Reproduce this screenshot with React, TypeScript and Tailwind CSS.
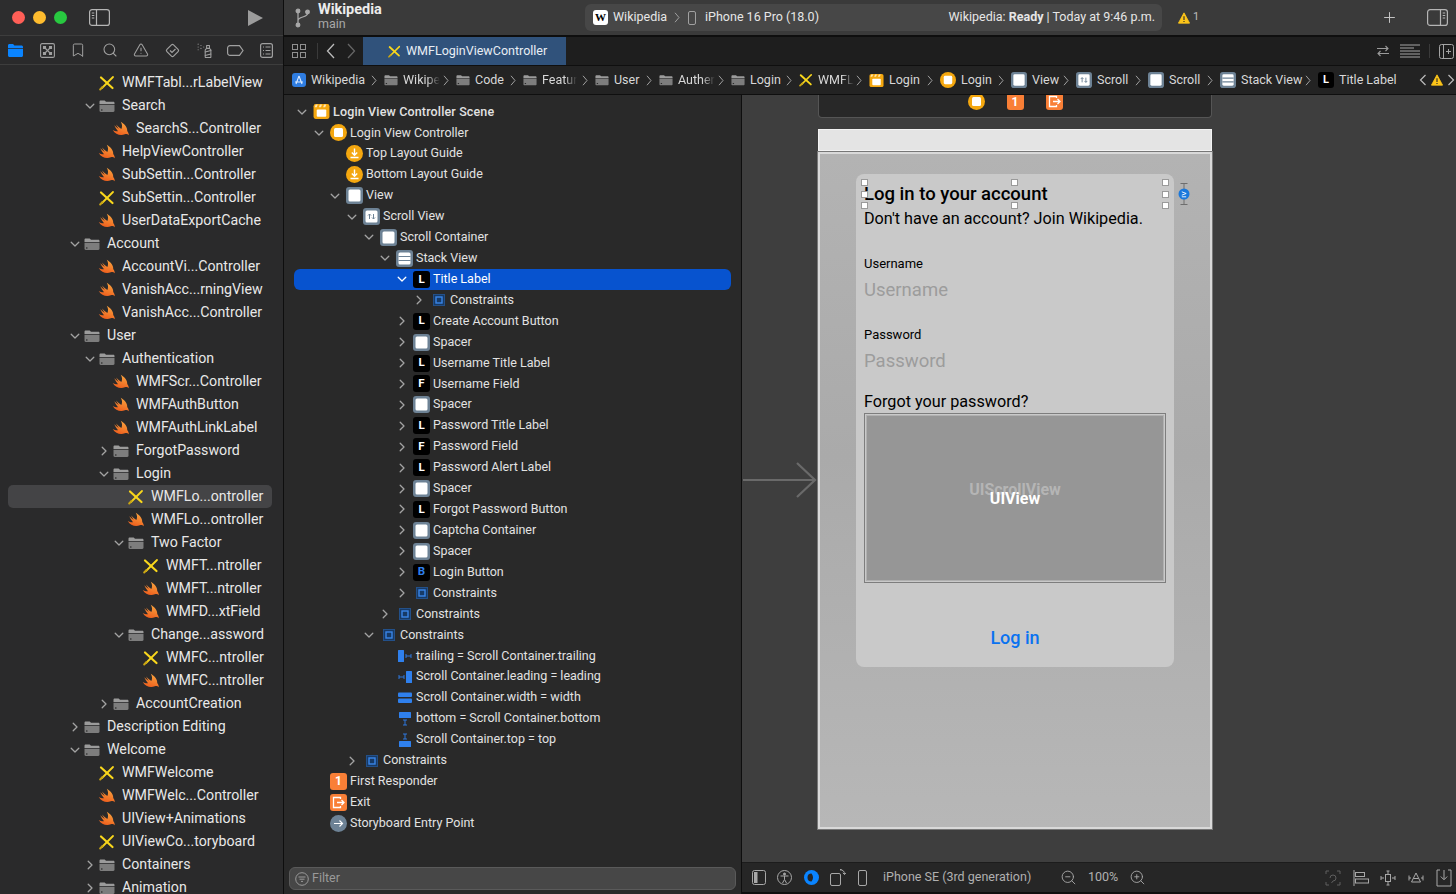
import { Bookmark, Plus, Search, SprayCan, TriangleAlert, ZoomIn, ZoomOut } from "lucide-react";
import type { ReactElement } from "react";

const Chevron = ({ open, color = "#a3a3a3" }: { open?: boolean; color?: string }) => (
  <svg width="10" height="10" viewBox="0 0 10 10" fill="none" stroke={color} strokeWidth="1.3" strokeLinecap="round" strokeLinejoin="round">
    {open ? <path d="M1.2 3.2 5 7 8.8 3.2" /> : <path d="M3.2 1.2 7 5 3.2 8.8" />}
  </svg>
);

const CrumbChevron = () => (
  <svg width="6" height="11" viewBox="0 0 6 11" fill="none" stroke="#a0a0a0" strokeWidth="1">
    <path d="M1 .8 5 5.500 1 10.200" />
  </svg>
);

const SwiftIcon = ({ size = 18 }: { size?: number }) => (
  <svg width={size} height={size} viewBox="0 0 24 24">
    <defs>
      <linearGradient id="swiftfill" x1="0.7" y1="0" x2="0.3" y2="1">
        <stop offset="0" stopColor="#f9a63f" />
        <stop offset="1" stopColor="#ee5c1c" />
      </linearGradient>
    </defs>
    <path
      fill="url(#swiftfill)"
      d="M1 13.2C3 14.500 5.500 15.300 8 15 6 12.500 4.200 9.800 3 7c2 2 4 3.600 6 5-1.200-2-2.600-4-3.700-6 2.300 2.300 4.700 4.200 7.200 6 1.300-3 1.300-6.400-.8-9.800 5.300 3 9.100 7.800 8.600 12.400 1.700 2.100 2.400 4.500 1.800 5.600-1.100-1.700-3.100-2-5-1.100C11 21.800 4.500 19 1 13.200Z"
    />
  </svg>
);

const StoryboardIcon = ({ size = 16 }: { size?: number }) => (
  <svg width={size} height={size} viewBox="0 0 16 16" fill="none" strokeLinecap="round">
    <path d="M2 2.500 13.500 13" stroke="#f9d71c" strokeWidth="2.200" />
    <path d="M14 2 3 13" stroke="#f9d71c" strokeWidth="1.800" />
    <path d="M1.200 14.500 3.500 12" stroke="#c9a514" strokeWidth="2" />
  </svg>
);

const FolderIcon = ({ size = 16 }: { size?: number }) => (
  <svg width={size} height={size} viewBox="0 0 16 16">
    <path d="M.5 3.700C.5 3 1 2.500 1.700 2.500h4L7 3.700h7.300c.7 0 1.200.5 1.200 1.200V6H.5Z" fill="#9b9b9b" />
    <path d="M.5 6.700h15v6.100c0 .7-.5 1.200-1.200 1.200H1.700C1 14 .5 13.500 .5 12.800Z" fill="#7d7d7d" />
    <rect x="2" y="11.400" width="1.500" height="1.200" fill="#2c2c2c" />
  </svg>
);

const SceneIcon = ({ size = 17 }: { size?: number }) => (
  <svg width={size} height={size} viewBox="0 0 16 16">
    <rect x="0.500" y="1" width="15" height="14" rx="2" fill="#f4a70f" />
    <path d="M2.500 1.500h2l-1 2.500h-2Zm4 0h2l-1 2.500h-2Zm4 0h2l-1 2.500h-2Z" fill="#ffe6b0" />
    <rect x="3.500" y="6" width="9" height="7" rx="1" fill="#fff" />
  </svg>
);

const VcIcon = ({ size = 17 }: { size?: number }) => (
  <svg width={size} height={size} viewBox="0 0 17 17">
    <circle cx="8.500" cy="8.500" r="8.500" fill="#f4a70f" />
    <rect x="4" y="4" width="9" height="9" rx="1.500" fill="#fff" />
  </svg>
);

const GuideIcon = () => (
  <svg width="17" height="17" viewBox="0 0 17 17" fill="none">
    <circle cx="8.500" cy="8.500" r="8.500" fill="#f4a70f" />
    <path d="M8.500 3.500v6.500M5.800 7.500l2.700 2.700 2.700-2.700M4.500 12.500h8" stroke="#fff" strokeWidth="1.400" />
  </svg>
);

const ViewIcon = ({ kind = "plain", size = 17 }: { kind?: "plain" | "scroll" | "stack"; size?: number }) => (
  <svg width={size} height={size} viewBox="0 0 17 17" fill="none">
    <rect x="0" y="0" width="17" height="17" rx="3" fill="#6d8295" />
    <rect x="2.500" y="2.500" width="12" height="12" rx="1.500" fill="#fff" />
    {kind === "scroll" && <path d="M6.500 11V6M5 7.500l1.500-1.500L8 7.500M10.500 6v5M9 9.500l1.500 1.500L12 9.500" stroke="#6d8295" strokeWidth="1" />}
    {kind === "stack" && <path d="M2.500 6.500h12M2.500 10.500h12" stroke="#6d8295" strokeWidth="1.200" />}
  </svg>
);

const LetterIcon = ({ letter, color = "#fff" }: { letter: string; color?: string }) => (
  <span className="flex h-[17px] w-[17px] items-center justify-center rounded-[3px] bg-black text-[11.500px] font-bold leading-none" style={{ color }}>
    {letter}
  </span>
);

const ConstraintsIcon = () => (
  <svg width="12" height="12" viewBox="0 0 12 12" fill="none">
    <rect x="0.500" y="0.500" width="11" height="11" fill="#173a66" stroke="#235089" />
    <rect x="3" y="3" width="6" height="6" stroke="#3b86e8" strokeWidth="1.400" />
  </svg>
);

const ConstraintLine = ({ kind }: { kind: "trailing" | "leading" | "width" | "bottom" | "top" }) => (
  <svg width="14" height="14" viewBox="0 0 14 14" fill="#2f80ed">
    {kind === "trailing" && (
      <g>
        <rect x="0" y="1" width="6" height="12" rx="0.500" />
        <path d="M8 5v4M13 5v4M8 7h5" stroke="#2f80ed" strokeWidth="0.900" fill="none" />
      </g>
    )}
    {kind === "leading" && (
      <g>
        <rect x="8" y="1" width="6" height="12" rx="0.500" />
        <path d="M1 5v4M6 5v4M1 7h5" stroke="#2f80ed" strokeWidth="0.900" fill="none" />
      </g>
    )}
    {kind === "width" && (
      <g>
        <rect x="0" y="1.500" width="14" height="4.500" rx="1" />
        <rect x="0" y="7.500" width="14" height="4.500" rx="1" />
      </g>
    )}
    {kind === "bottom" && (
      <g>
        <rect x="1" y="0" width="12" height="6" rx="0.500" />
        <path d="M5 8h4M5 13h4M7 8v5" stroke="#2f80ed" strokeWidth="0.900" fill="none" />
      </g>
    )}
    {kind === "top" && (
      <g>
        <rect x="1" y="8" width="12" height="6" rx="0.500" />
        <path d="M5 1h4M5 6h4M7 1v5" stroke="#2f80ed" strokeWidth="0.900" fill="none" />
      </g>
    )}
  </svg>
);

const ResponderIcon = () => (
  <span className="flex h-[17px] w-[17px] items-center justify-center rounded-[3px] bg-[#f97f36] text-[12px] font-bold leading-none text-white">1</span>
);

const ExitIcon = ({ size = 17 }: { size?: number }) => (
  <svg width={size} height={size} viewBox="0 0 17 17" fill="none">
    <rect width="17" height="17" rx="3" fill="#f97f36" />
    <path d="M10.500 5V3.500h-7v10h7V12M7 8.500h7M11.500 6l2.500 2.500-2.500 2.500" stroke="#fff" strokeWidth="1.300" />
  </svg>
);

const EntryIcon = () => (
  <svg width="17" height="17" viewBox="0 0 17 17" fill="none">
    <circle cx="8.500" cy="8.500" r="8.500" fill="#6d8295" />
    <path d="M4 8.500h8.500M9.500 5.500l3 3-3 3" stroke="#fff" strokeWidth="1.200" />
  </svg>
);

const WarnIcon = ({ size = 14 }: { size?: number }) => (
  <svg width={size} height={size} viewBox="0 0 14 14">
    <path d="M7 1 13.500 13H.5Z" fill="#fcc419" stroke="#fcc419" strokeLinejoin="round" />
    <path d="M7 5v4.200M7 10.400v1.200" stroke="#2a2a2a" strokeWidth="1.300" />
  </svg>
);

const PanelIcon = ({ side }: { side: "left" | "right" }) => (
  <svg width="21" height="17" viewBox="0 0 21 17" fill="none" stroke="#b5b5b5" strokeWidth="1.200">
    <rect x="0.600" y="0.600" width="19.800" height="15.800" rx="2.500" />
    {side === "left" ? <path d="M7.500 1v15M2.800 4h2.500M2.800 6.500h2.500M2.800 9h2.500" /> : <path d="M13.500 1v15M15.700 4h2.500M15.700 6.500h2.500M15.700 9h2.500" />}
  </svg>
);

const BranchIcon = () => (
  <svg width="15" height="20" viewBox="0 0 15 20" fill="none" stroke="#a8a8a8" strokeWidth="1.300">
    <circle cx="3" cy="3" r="1.800" fill="#a8a8a8" />
    <circle cx="3" cy="17" r="1.800" fill="#a8a8a8" />
    <circle cx="12.500" cy="4" r="1.800" fill="#a8a8a8" />
    <path d="M3 4v12M12.500 5.500c0 4-9.500 3-9.500 7" />
  </svg>
);

const NavFolder = () => (
  <svg width="15" height="13" viewBox="0 0 15 13">
    <path d="M0 1.500C0 .7.600 0 1.400 0h3.700l1.300 1.500h7c.9 0 1.600.6 1.600 1.400V4H0Z" fill="#0a84ff" />
    <path d="M0 4.800h15v6.700c0 .9-.7 1.500-1.500 1.500h-12C.7 13 0 12.400 0 11.500Z" fill="#0a84ff" />
  </svg>
);

const Navigators = () => {
  const c = "#a0a0a0";
  return (
    <div className="flex h-[30px] shrink-0 items-center border-y border-[#3d3d3d]">
      {[
        <NavFolder key="a" />,
        <svg key="b" width="15" height="15" viewBox="0 0 15 15" fill="none" stroke={c} strokeWidth="1.100">
          <rect x="0.600" y="0.600" width="13.800" height="13.800" rx="1.500" />
          <path d="M4 4l7 7M11 4l-7 7" />
          <path d="M3.500 3.500h2v2h-2Zm6 0h2v2h-2Zm-6 6h2v2h-2Zm6 0h2v2h-2Z" fill={c} />
        </svg>,
        <Bookmark key="c" size={16} color={c} strokeWidth={1.500} />,
        <Search key="d" size={16} color={c} strokeWidth={1.600} />,
        <TriangleAlert key="e" size={16} color={c} strokeWidth={1.600} />,
        <svg key="f" width="15" height="15" viewBox="0 0 15 15" fill="none" stroke={c} strokeWidth="1.200">
          <rect x="2.800" y="2.800" width="9.400" height="9.400" rx="1.500" transform="rotate(45 7.500 7.500)" />
          <path d="M5 7.500l2 2 3.500-3.500" />
        </svg>,
        <SprayCan key="g" size={17} color={c} strokeWidth={1.500} />,
        <svg key="h" width="17" height="11" viewBox="0 0 17 11" fill="none" stroke={c} strokeWidth="1.200">
          <path d="M3 .6h9.500L16 5.500l-3.500 4.900H3A2.400 2.400 0 0 1 .6 8V3A2.400 2.400 0 0 1 3 .6Z" />
        </svg>,
        <svg key="i" width="13" height="15" viewBox="0 0 13 15" fill="none" stroke={c} strokeWidth="1.200">
          <rect x="0.600" y="0.600" width="11.800" height="13.800" rx="2" />
          <path d="M3 4h1M5.500 4h5M3 7.500h1M5.500 7.500h5M3 11h1M5.500 11h5" />
        </svg>,
      ].map((icon, i) => (
        <div key={i} className="flex h-full w-[31.400px] shrink-0 items-center justify-center">
          {icon}
        </div>
      ))}
    </div>
  );
};

type TreeKind = "swift" | "sb" | "open" | "closed";
const tree: [string, number, TreeKind][] = [
  ["WMFTabl...rLabelView", 1, "sb"],
  ["Search", 1, "open"],
  ["SearchS...Controller", 2, "swift"],
  ["HelpViewController", 1, "swift"],
  ["SubSettin...Controller", 1, "swift"],
  ["SubSettin...Controller", 1, "sb"],
  ["UserDataExportCache", 1, "swift"],
  ["Account", 0, "open"],
  ["AccountVi...Controller", 1, "swift"],
  ["VanishAcc...rningView", 1, "swift"],
  ["VanishAcc...Controller", 1, "swift"],
  ["User", 0, "open"],
  ["Authentication", 1, "open"],
  ["WMFScr...Controller", 2, "swift"],
  ["WMFAuthButton", 2, "swift"],
  ["WMFAuthLinkLabel", 2, "swift"],
  ["ForgotPassword", 2, "closed"],
  ["Login", 2, "open"],
  ["WMFLo...ontroller", 3, "sb"],
  ["WMFLo...ontroller", 3, "swift"],
  ["Two Factor", 3, "open"],
  ["WMFT...ntroller", 4, "sb"],
  ["WMFT...ntroller", 4, "swift"],
  ["WMFD...xtField", 4, "swift"],
  ["Change...assword", 3, "open"],
  ["WMFC...ntroller", 4, "sb"],
  ["WMFC...ntroller", 4, "swift"],
  ["AccountCreation", 2, "closed"],
  ["Description Editing", 0, "closed"],
  ["Welcome", 0, "open"],
  ["WMFWelcome", 1, "sb"],
  ["WMFWelc...Controller", 1, "swift"],
  ["UIView+Animations", 1, "swift"],
  ["UIViewCo...toryboard", 1, "sb"],
  ["Containers", 1, "closed"],
  ["Animation", 1, "closed"],
];
const treeIndent = ["pl-[59px]", "pl-[74px]", "pl-[88px]", "pl-[103px]", "pl-[118px]"];

const Sidebar = () => (
  <aside className="flex h-full w-[284px] shrink-0 flex-col overflow-hidden border-r border-[#0e0e0e] bg-[#2a2a2b]">
    <div className="flex h-[35px] shrink-0 items-center bg-[#2d2d2e] pl-[12px]">
      <span className="h-[13px] w-[13px] rounded-full bg-[#ff5f57]" />
      <span className="ml-[8px] h-[13px] w-[13px] rounded-full bg-[#febc2e]" />
      <span className="ml-[8px] h-[13px] w-[13px] rounded-full bg-[#28c840]" />
      <span className="ml-[22px]">
        <PanelIcon side="left" />
      </span>
      <svg className="ml-[138px]" width="15" height="16" viewBox="0 0 15 16">
        <path d="M0 0 15 8 0 16Z" fill="#9c9c9c" />
      </svg>
    </div>
    <Navigators />
    <div className="pt-[6px]">
      {tree.map(([name, level, kind], i) => (
        <div
          key={i}
          className={`ml-[8px] mr-[11px] flex h-[23px] items-center rounded-[5px] text-[14.200px] text-[#e8e8e8] ${treeIndent[level]} ${i === 18 ? "bg-[#444446]" : ""}`}
        >
          <span className="flex w-[16px] justify-center">{kind === "open" ? <Chevron open /> : kind === "closed" ? <Chevron /> : null}</span>
          <span className="flex w-[24px] justify-center pr-[6px]">
            {kind === "swift" ? <SwiftIcon /> : kind === "sb" ? <StoryboardIcon /> : <FolderIcon />}
          </span>
          <span className="whitespace-nowrap">{name}</span>
        </div>
      ))}
    </div>
  </aside>
);

const Toolbar = () => (
  <div className="flex h-[35px] shrink-0 items-center bg-[#3a3a3a]">
    <div className="flex w-[34px] justify-center pl-[2px]">
      <BranchIcon />
    </div>
    <div className="-mt-[2px] w-[267px] leading-none">
      <div className="text-[14.500px] font-bold text-[#ececec]">Wikipedia</div>
      <div className="text-[12.500px] text-[#a8a8a8]">main</div>
    </div>
    <div className="flex h-[27px] w-[577px] items-center rounded-[6px] bg-[#474747] pl-[8px] pr-[7px] text-[12.500px] text-[#e6e6e6]">
      <span className="flex h-[15px] w-[15px] items-center justify-center rounded-[3px] bg-white font-['Liberation_Serif',serif] text-[11px] font-bold text-black">W</span>
      <span className="ml-[5px]">Wikipedia</span>
      <span className="ml-[7px]">
        <CrumbChevron />
      </span>
      <svg className="ml-[8px]" width="8" height="14" viewBox="0 0 8 14" fill="none" stroke="#a0a0a0">
        <rect x="0.500" y="0.500" width="7" height="13" rx="1.500" />
      </svg>
      <span className="ml-[9px]">iPhone 16 Pro (18.0)</span>
      <span className="ml-auto">
        Wikipedia: <b className="font-bold">Ready</b> | Today at 9:46 p.m.
      </span>
    </div>
    <span className="ml-[16px]">
      <WarnIcon size={12} />
    </span>
    <span className="ml-[3px] text-[11px] text-[#bdbdbd]">1</span>
    <Plus className="ml-[182px]" size={17} color="#c4c4c4" strokeWidth={1.400} />
    <span className="ml-[29px]">
      <PanelIcon side="right" />
    </span>
  </div>
);

const TabBar = () => (
  <div className="mt-[2px] flex h-[28px] shrink-0 items-center bg-[#1e1e1e]">
    <svg className="ml-[8px]" width="14" height="14" viewBox="0 0 14 14" fill="none" stroke="#8f8f8f">
      <rect x="0.500" y="0.500" width="5" height="5" />
      <rect x="8.500" y="0.500" width="5" height="5" />
      <rect x="0.500" y="8.500" width="5" height="5" />
      <rect x="8.500" y="8.500" width="5" height="5" />
    </svg>
    <span className="ml-[11px] h-[16px] w-px bg-[#3a3a3a]" />
    <svg className="ml-[8px]" width="10" height="16" viewBox="0 0 10 16" fill="none" stroke="#bcbcbc" strokeWidth="1.300">
      <path d="M8 1 1.500 8 8 15" />
    </svg>
    <svg className="ml-[10px]" width="10" height="16" viewBox="0 0 10 16" fill="none" stroke="#666" strokeWidth="1.300">
      <path d="M2 1 8.500 8 2 15" />
    </svg>
    <div className="ml-[7px] flex h-full w-[203px] items-center bg-[#30527b] pl-[25px] text-[12.500px] text-[#e8eef5]">
      <StoryboardIcon size={13} />
      <span className="ml-[5px]">WMFLoginViewController</span>
    </div>
    <svg className="ml-auto" width="14" height="14" viewBox="0 0 14 14" fill="none" stroke="#9a9a9a" strokeWidth="1.100">
      <path d="M1 4.500h11M9.500 2 12 4.500 9.500 7M13 9.500H2M4.500 7 2 9.500 4.500 12" />
    </svg>
    <svg className="ml-[10px]" width="20" height="14" viewBox="0 0 20 14" fill="none" stroke="#a5a5a5">
      <path d="M0 1h20M0 4h14M0 7h20M0 10h20M0 13h20" />
    </svg>
    <span className="ml-[9px] h-[14px] w-px bg-[#3a3a3a]" />
    <svg className="ml-[9px] mr-[2px]" width="15" height="15" viewBox="0 0 15 15" fill="none" stroke="#a5a5a5">
      <rect x="0.500" y="0.500" width="14" height="14" rx="2" />
      <path d="M4.500 1v13M9.500 5v5M7 7.500h5" />
    </svg>
  </div>
);

// label is what stays visible, the fade stands in for Xcode's truncation
type Crumb = [ReactElement, string, string, boolean];
const crumbs: Crumb[] = [
  [
    <svg key="xc" width="14" height="14" viewBox="0 0 14 14" fill="none">
      <rect width="14" height="14" rx="3" fill="#2f7de1" />
      <path d="M7 3 4 11M7 3l3 8M3 9h8" stroke="#dcebff" strokeWidth="1.100" />
    </svg>,
    "Wikipedia",
    "w-[92px]",
    false,
  ],
  [<FolderIcon key="f1" size={14} />, "Wikipe", "w-[72px]", true],
  [<FolderIcon key="f2" size={14} />, "Code", "w-[67px]", false],
  [<FolderIcon key="f3" size={14} />, "Featur", "w-[72px]", true],
  [<FolderIcon key="f4" size={14} />, "User", "w-[64px]", false],
  [<FolderIcon key="f5" size={14} />, "Auther", "w-[72px]", true],
  [<FolderIcon key="f6" size={14} />, "Login", "w-[68px]", false],
  [<StoryboardIcon key="s" size={14} />, "WMFL", "w-[70px]", true],
  [<SceneIcon key="sc" size={15} />, "Login", "w-[71px]", false],
  [<VcIcon key="vc" size={16} />, "Login", "w-[71px]", false],
  [<ViewIcon key="v" size={16} />, "View", "w-[65px]", false],
  [<ViewIcon key="sv" size={16} kind="scroll" />, "Scroll", "w-[72px]", false],
  [<ViewIcon key="sc2" size={16} />, "Scroll", "w-[72px]", false],
  [<ViewIcon key="st" size={16} kind="stack" />, "Stack View", "w-[98px]", false],
];

const Breadcrumbs = () => (
  <div className="flex h-[30px] shrink-0 items-center border-y border-[#0f0f0f] bg-[#232323] pl-[8px] text-[12.500px] text-[#d8d8d8]">
    {crumbs.map(([icon, label, width, fade], i) => (
      <div key={i} className={`flex shrink-0 items-center ${width}`}>
        <span className="flex shrink-0 justify-center">{icon}</span>
        <span className="ml-[5px] min-w-0 flex-1 whitespace-nowrap">
          <span className={fade ? "[mask-image:linear-gradient(to_right,black_65%,transparent)]" : ""}>{label}</span>
        </span>
        <span className="mr-[7px] flex shrink-0">
          <CrumbChevron />
        </span>
      </div>
    ))}
    <span className="flex h-[16px] w-[16px] items-center justify-center rounded-[3px] bg-black text-[11px] font-bold text-white">L</span>
    <span className="ml-[5px]">Title Label</span>
    <svg className="ml-auto" width="8" height="12" viewBox="0 0 8 12" fill="none" stroke="#bcbcbc" strokeWidth="1.200">
      <path d="M6.500 1 1.500 6l5 5" />
    </svg>
    <span className="ml-[4px]">
      <WarnIcon size={12} />
    </span>
    <svg className="ml-[4px] mr-[1px]" width="8" height="12" viewBox="0 0 8 12" fill="none" stroke="#bcbcbc" strokeWidth="1.200">
      <path d="M1.500 1l5 5-5 5" />
    </svg>
  </div>
);

type OutlineChevron = "open" | "closed" | "none";
const outline: [string, number, OutlineChevron, ReactElement][] = [
  ["Login View Controller Scene", 0, "open", <SceneIcon />],
  ["Login View Controller", 1, "open", <VcIcon />],
  ["Top Layout Guide", 2, "none", <GuideIcon />],
  ["Bottom Layout Guide", 2, "none", <GuideIcon />],
  ["View", 2, "open", <ViewIcon />],
  ["Scroll View", 3, "open", <ViewIcon kind="scroll" />],
  ["Scroll Container", 4, "open", <ViewIcon />],
  ["Stack View", 5, "open", <ViewIcon kind="stack" />],
  ["Title Label", 6, "open", <LetterIcon letter="L" />],
  ["Constraints", 7, "closed", <ConstraintsIcon />],
  ["Create Account Button", 6, "closed", <LetterIcon letter="L" />],
  ["Spacer", 6, "closed", <ViewIcon />],
  ["Username Title Label", 6, "closed", <LetterIcon letter="L" />],
  ["Username Field", 6, "closed", <LetterIcon letter="F" />],
  ["Spacer", 6, "closed", <ViewIcon />],
  ["Password Title Label", 6, "closed", <LetterIcon letter="L" />],
  ["Password Field", 6, "closed", <LetterIcon letter="F" />],
  ["Password Alert Label", 6, "closed", <LetterIcon letter="L" />],
  ["Spacer", 6, "closed", <ViewIcon />],
  ["Forgot Password Button", 6, "closed", <LetterIcon letter="L" />],
  ["Captcha Container", 6, "closed", <ViewIcon />],
  ["Spacer", 6, "closed", <ViewIcon />],
  ["Login Button", 6, "closed", <LetterIcon letter="B" color="#2f80ed" />],
  ["Constraints", 6, "closed", <ConstraintsIcon />],
  ["Constraints", 5, "closed", <ConstraintsIcon />],
  ["Constraints", 4, "open", <ConstraintsIcon />],
  ["trailing = Scroll Container.trailing", 5, "none", <ConstraintLine kind="trailing" />],
  ["Scroll Container.leading = leading", 5, "none", <ConstraintLine kind="leading" />],
  ["Scroll Container.width = width", 5, "none", <ConstraintLine kind="width" />],
  ["bottom = Scroll Container.bottom", 5, "none", <ConstraintLine kind="bottom" />],
  ["Scroll Container.top = top", 5, "none", <ConstraintLine kind="top" />],
  ["Constraints", 3, "closed", <ConstraintsIcon />],
  ["First Responder", 1, "none", <ResponderIcon />],
  ["Exit", 1, "none", <ExitIcon />],
  ["Storyboard Entry Point", 1, "none", <EntryIcon />],
];
const outlineIndent = ["pl-0", "pl-[17px]", "pl-[33px]", "pl-[50px]", "pl-[67px]", "pl-[83px]", "pl-[100px]", "pl-[117px]"];

const Outline = () => (
  <div className="flex h-full w-[458px] shrink-0 flex-col border-r border-[#0e0e0e] bg-[#292929]">
    <div className="min-h-0 flex-1 overflow-hidden pt-[6.500px]">
      {outline.map(([name, level, chev, icon], i) => {
        const selected = i === 8;
        return (
          <div
            key={i}
            className={`mx-[10px] flex h-[20.930px] items-center rounded-[6px] text-[12.500px] text-[#e2e2e2] ${outlineIndent[level]} ${selected ? "bg-[#0753cf] text-white" : ""} ${i === 0 ? "font-medium tracking-[0.150px]" : ""}`}
          >
            <span className="flex w-[16px] justify-center">
              {chev === "open" ? <Chevron open color={selected ? "#fff" : undefined} /> : chev === "closed" ? <Chevron /> : null}
            </span>
            <span className="flex w-[23px] justify-center">{icon}</span>
            <span className="whitespace-nowrap">{name}</span>
          </div>
        );
      })}
    </div>
    <div className="mx-[5px] mb-[4px] flex h-[23px] shrink-0 items-center rounded-[6px] border border-[#5a5a5a] bg-[#474747] pl-[5px] text-[12.500px] text-[#9a9a9a]">
      <svg width="14" height="14" viewBox="0 0 14 14" fill="none" stroke="#9a9a9a">
        <circle cx="7" cy="7" r="6.300" />
        <path d="M3.500 5h7M4.500 7.200h5M6 9.400h2" />
      </svg>
      <span className="ml-[3px]">Filter</span>
    </div>
  </div>
);

const Handle = ({ className }: { className: string }) => <span className={`absolute h-[7px] w-[7px] border border-[#9a9a9a] bg-white ${className}`} />;

const LoginCard = () => (
  <div className="relative ml-[36px] mt-[20px] flex h-[493px] w-[318px] flex-col rounded-[8px] bg-[#c9c9c9] px-[8px] text-black">
    <div className="mt-[9px] text-[18.500px] font-medium leading-[22px]">Log in to your account</div>
    <div className="mt-[3px] text-[16.200px] leading-[22px]">Don't have an account? Join Wikipedia.</div>
    <div className="mt-[26px] text-[13px] leading-[16px]">Username</div>
    <div className="mt-[6px] text-[18.500px] leading-[24px] text-[#9c9c9c]">Username</div>
    <div className="mt-[25px] text-[13px] leading-[16px]">Password</div>
    <div className="mt-[6px] text-[18.500px] leading-[24px] text-[#9c9c9c]">Password</div>
    <div className="mt-[18px] text-[16.200px] leading-[22px]">Forgot your password?</div>
    <div className="flex h-[170px] w-[302px] flex-col items-center justify-center border border-[#7d7d7d] p-px">
      <div className="flex h-full w-full flex-col items-center justify-center border border-[#b0b0b0] bg-[#969696] pb-[7px] text-[16px] font-bold leading-none">
        <span className="text-[#b5b5b5]">UIScrollView</span>
        <span className="-mt-[7px] text-white">UIView</span>
      </div>
    </div>
    <div className="mt-[43px] text-center text-[18px] font-medium leading-[24px] text-[#0a72f0]">Log in</div>
    <Handle className="left-[5px] top-[5px]" />
    <Handle className="left-[155px] top-[5px]" />
    <Handle className="left-[306px] top-[5px]" />
    <Handle className="left-[5px] top-[17px]" />
    <Handle className="left-[306px] top-[17px]" />
    <Handle className="left-[5px] top-[28px]" />
    <Handle className="left-[155px] top-[28px]" />
    <Handle className="left-[306px] top-[28px]" />
    <svg className="absolute left-[322px] top-[8px]" width="12" height="24" viewBox="0 0 12 24" fill="none" stroke="#6e6e6e">
      <path d="M2.500 1.500h7M6 1.500v21M2.500 22.500h7" />
      <circle cx="6" cy="12" r="5.500" fill="#1a78dc" stroke="none" />
      <path d="M3.800 9.800 8.200 11.500 3.800 13.200M3.800 14.800h4.400" stroke="#fff" strokeWidth="0.900" />
    </svg>
  </div>
);

const BottomBar = () => {
  const c = "#a8a8a8";
  return (
    <div className="flex h-[32px] shrink-0 items-center border-b-2 border-[#0e0e0e] border-t border-t-[#1c1c1c] bg-[#262626] pl-[10px] text-[12.500px] text-[#b0b0b0]">
      <svg width="14" height="15" viewBox="0 0 14 15" fill="none" stroke={c}>
        <rect x="0.500" y="0.500" width="13" height="14" rx="2" />
        <rect x="2" y="2" width="3.500" height="11" fill={c} stroke="none" />
      </svg>
      <svg className="ml-[11px]" width="15" height="15" viewBox="0 0 15 15" fill="none" stroke={c}>
        <circle cx="7.500" cy="7.500" r="7" />
        <circle cx="7.500" cy="4" r="1" fill={c} />
        <path d="M3.500 6h8M7.500 6v3.500M7.500 9.500l-2 3.500M7.500 9.500l2 3.500" />
      </svg>
      <svg className="ml-[12px]" width="15" height="15" viewBox="0 0 15 15">
        <circle cx="7.500" cy="7.500" r="7.500" fill="#0a84ff" />
        <path d="M7.500 3.500A4 4 0 0 0 7.500 11.500C9.500 9 9.500 6 7.500 3.500Z" fill="#262626" />
      </svg>
      <svg className="ml-[11px]" width="16" height="17" viewBox="0 0 16 17" fill="none" stroke={c}>
        <rect x="0.500" y="4.500" width="10" height="12" rx="1.500" />
        <path d="M10 .8c3 0 4.500 1.500 4.500 4.500M12.800 3.800l1.700 1.700 1.500-1.700M10 .8l1.800-.8" />
      </svg>
      <svg className="ml-[12px]" width="9" height="16" viewBox="0 0 9 16" fill="none" stroke={c}>
        <rect x="0.500" y="0.500" width="8" height="15" rx="1.500" />
      </svg>
      <span className="ml-[16px] w-[148px] whitespace-nowrap">iPhone SE (3rd generation)</span>
      <ZoomOut className="ml-[29px]" size={17} color={c} strokeWidth={1.300} />
      <span className="ml-[11px] w-[31px]">100%</span>
      <ZoomIn className="ml-[10px]" size={17} color={c} strokeWidth={1.300} />
      <svg className="ml-auto" width="16" height="16" viewBox="0 0 16 16" fill="none" stroke="#5f5f5f">
        <path d="M1 4V1h3M12 1h3v3M1 12v3h3M15 12v3h-3M5 8a3 3 0 1 1 3 3l-1.500 2" />
      </svg>
      <svg className="ml-[12px]" width="16" height="16" viewBox="0 0 16 16" fill="none" stroke={c}>
        <path d="M1 0v16" />
        <rect x="2.500" y="2.500" width="9" height="4" />
        <rect x="2.500" y="9" width="13" height="4" />
      </svg>
      <svg className="ml-[11px]" width="16" height="16" viewBox="0 0 16 16" fill="none" stroke={c}>
        <rect x="5.500" y="4.500" width="5" height="7" />
        <path d="M8 1v3M6.500 1h3M8 12v3M6.500 15h3M1 6v4M1 8h3M15 6v4M12 8h3" />
      </svg>
      <svg className="ml-[12px]" width="16" height="14" viewBox="0 0 16 14" fill="none" stroke={c}>
        <path d="M8 2 12.500 11h-9ZM5.500 7.500h5M1 4.500v5M1 7h2M15 4.500v5M13 7h2" />
      </svg>
      <svg className="ml-[12px] mr-[4px]" width="16" height="18" viewBox="0 0 16 18" fill="none" stroke={c}>
        <path d="M4 1H1v16h14V1h-3M8 1v9M4.800 7.500 8 10.800l3.200-3.300" />
      </svg>
    </div>
  );
};

const Canvas = () => (
  <div className="relative flex h-full min-w-0 flex-1 flex-col bg-[#3e3e3e]">
    <div className="min-h-0 flex-1 overflow-hidden pl-[76px]">
      <div className="flex h-[23px] w-[394px] items-center justify-center gap-[22px] rounded-b-[4px] border-x border-b border-[#555] bg-[#282828]">
        <span className="-mt-[9px]">
          <VcIcon />
        </span>
        <span className="-mt-[9px]">
          <ResponderIcon />
        </span>
        <span className="-mt-[9px]">
          <ExitIcon />
        </span>
      </div>
      <div className="mt-[11px] h-[22px] w-[394px] border border-[#f3f3f3] bg-[#e4e4e4]" />
      <div className="mt-px h-[677px] w-[394px] border-2 border-[#d9d9d9] bg-[linear-gradient(180deg,#b3b3b3,#aaaaaa_45%,#b7b7b7)] [box-shadow:0_0_0_1px_#777]">
        <LoginCard />
      </div>
    </div>
    <svg className="absolute left-0 top-[367px]" width="76" height="36" viewBox="0 0 76 36" fill="none" stroke="#6a6a6a" strokeWidth="2.200">
      <path d="M1 18h72M55 1l18 17-18 17" />
    </svg>
    <BottomBar />
  </div>
);

export default function App() {
  return (
    <div className="flex h-[894px] w-[1456px] overflow-hidden bg-[#0e0e0e] font-['Roboto',sans-serif] text-[#e5e5e5]">
      <Sidebar />
      <div className="flex h-full min-w-0 flex-1 flex-col">
        <Toolbar />
        <TabBar />
        <Breadcrumbs />
        <div className="flex min-h-0 flex-1">
          <Outline />
          <Canvas />
        </div>
      </div>
    </div>
  );
}
